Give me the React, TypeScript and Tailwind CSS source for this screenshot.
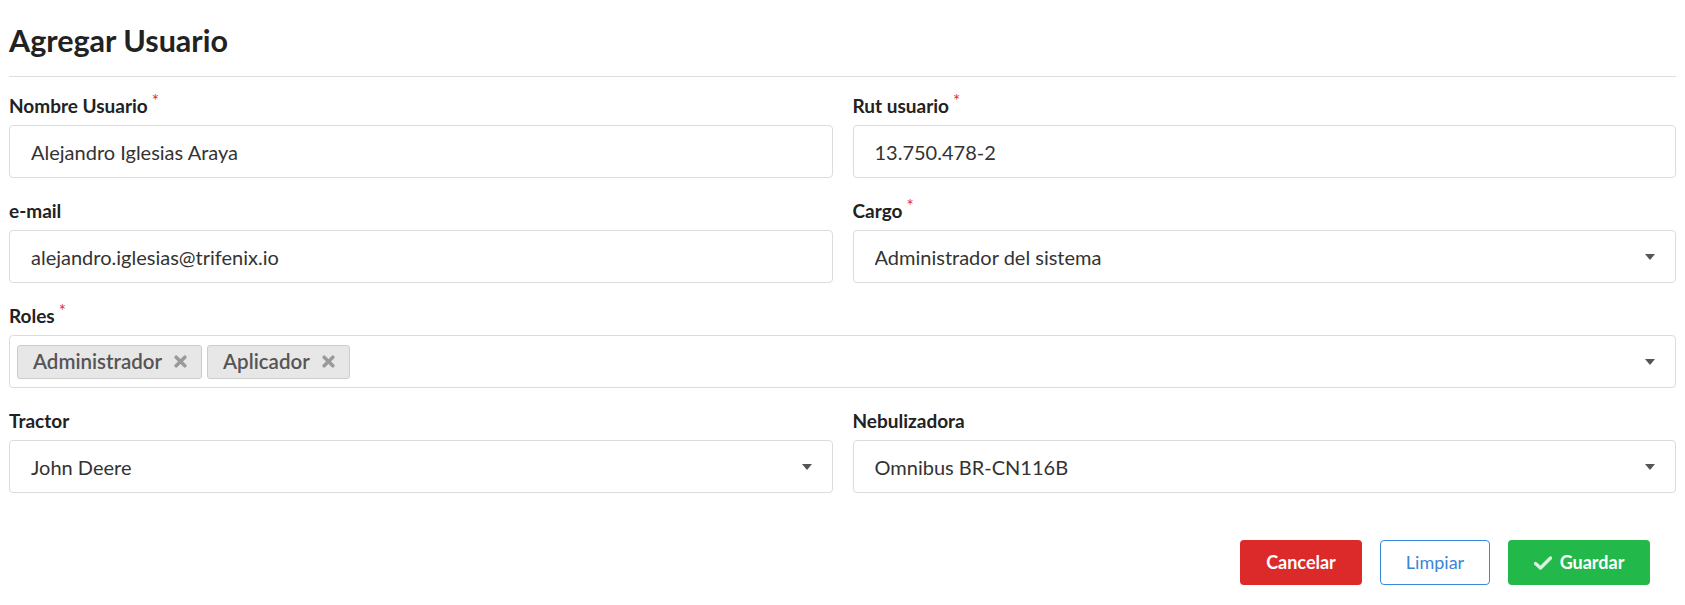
import React from 'react';

const font = { fontFamily: 'Lato, "Open Sans", sans-serif' };

function Caret() {
  return (
    <svg width="10" height="6" viewBox="0 0 10 6" className="shrink-0">
      <path d="M0 0 L10 0 L5 6 Z" fill="#555555" />
    </svg>
  );
}

function Times() {
  return (
    <svg width="13" height="13" viewBox="0 0 12 12" className="shrink-0">
      <path d="M2 2 L10 10 M10 2 L2 10" stroke="#9a9a9a" strokeWidth="3.2" strokeLinecap="round" />
    </svg>
  );
}

function Field({
  label,
  required,
  children,
}: {
  label: string;
  required?: boolean;
  children: React.ReactNode;
}) {
  return (
    <div className="flex flex-col">
      <label className="mb-[9px] flex h-[20px] items-start text-[19px] leading-[20px] font-bold text-[#222]">
        {label}
        {required && (
          <span className="ml-[4px] -mt-[4px] text-[17px] leading-[17px] font-normal text-[#e0302f]">*</span>
        )}
      </label>
      {children}
    </div>
  );
}

function Box({ children, select }: { children?: React.ReactNode; select?: boolean }) {
  return (
    <div className="flex h-[53px] items-center rounded-[4px] border border-[#dcdcdc] bg-white pr-[20px] pl-[21px] text-[20px] text-[#333]">
      <div className="flex-1 truncate">{children}</div>
      {select && <Caret />}
    </div>
  );
}

function Tag({ text }: { text: string }) {
  return (
    <div className="flex h-[34px] items-center gap-[12px] rounded-[3px] border border-[#cccccc] bg-[#e7e7e7] pr-[14px] pl-[15px] text-[20.5px] font-semibold text-[#555]">
      {text}
      <Times />
    </div>
  );
}

export default function App() {
  return (
    <div className="min-h-screen bg-white px-[9px]" style={font}>
      <h1 className="pt-[22px] text-[30.5px] leading-[36px] font-bold text-[#222]">Agregar Usuario</h1>
      <hr className="mt-[18px] border-t border-[#dedede]" />

      <div className="mt-[19px] grid grid-cols-2 gap-x-[20px] gap-y-[23px]">
        <Field label="Nombre Usuario" required>
          <Box>Alejandro Iglesias Araya</Box>
        </Field>
        <Field label="Rut usuario" required>
          <Box>13.750.478-2</Box>
        </Field>
        <Field label="e-mail">
          <Box>alejandro.iglesias@trifenix.io</Box>
        </Field>
        <Field label="Cargo" required>
          <Box select>Administrador del sistema</Box>
        </Field>
        <div className="col-span-2">
          <Field label="Roles" required>
            <div className="flex h-[53px] items-center rounded-[4px] border border-[#dcdcdc] bg-white pr-[20px] pl-[7px]">
              <div className="flex flex-1 items-center gap-[5px]">
                <Tag text="Administrador" />
                <Tag text="Aplicador" />
              </div>
              <Caret />
            </div>
          </Field>
        </div>
        <Field label="Tractor">
          <Box select>John Deere</Box>
        </Field>
        <Field label="Nebulizadora">
          <Box select>Omnibus BR-CN116B</Box>
        </Field>
      </div>

      <div className="mt-[47px] mr-[26px] flex justify-end gap-[18px]">
        <button className="h-[45px] w-[122px] rounded-[4px] bg-[#dc2a2a] text-[18px] font-bold text-white">
          Cancelar
        </button>
        <button className="h-[45px] w-[110px] rounded-[4px] border border-[#3a8ad8] bg-white text-[18px] text-[#3a86d4]">
          Limpiar
        </button>
        <button className="flex h-[45px] w-[142px] items-center justify-center gap-[8px] rounded-[4px] bg-[#22b84a] text-[18px] font-bold text-white">
          <svg width="18" height="14" viewBox="0 0 18 14">
            <path d="M1.5 7.5 L6.5 12 L16.5 2" fill="none" stroke="#d9f2df" strokeWidth="3.4" strokeLinecap="round" strokeLinejoin="round" />
          </svg>
          Guardar
        </button>
      </div>
    </div>
  );
}
